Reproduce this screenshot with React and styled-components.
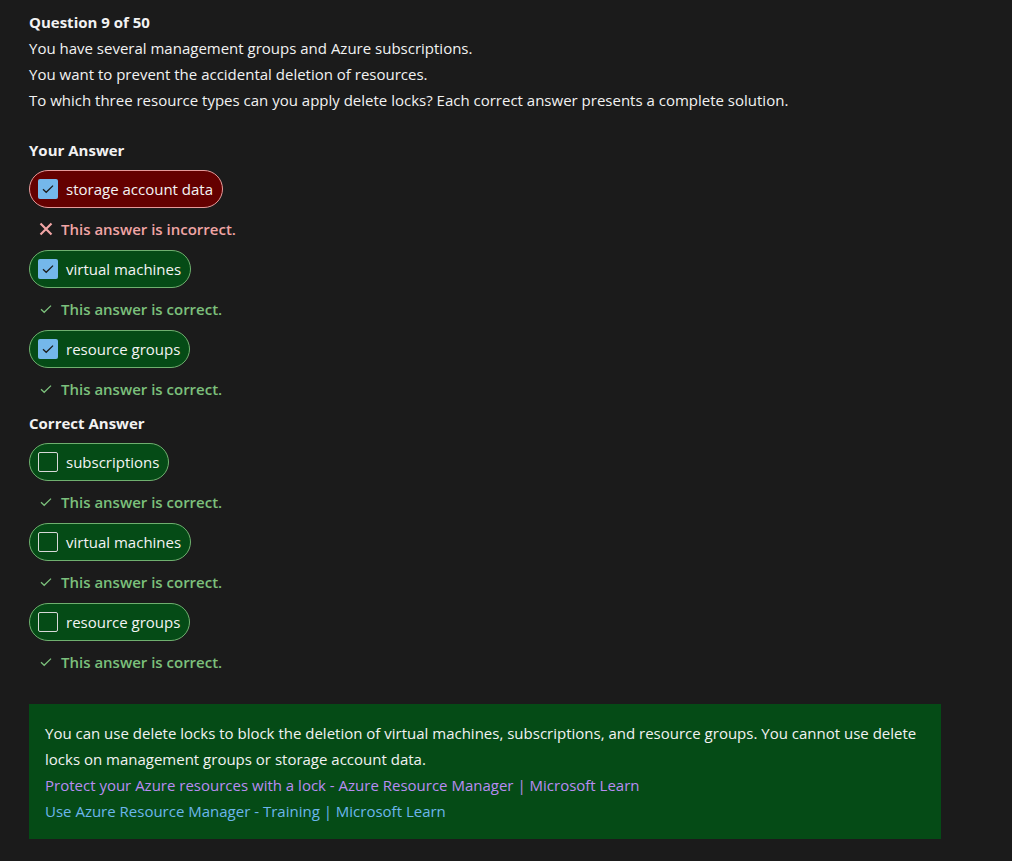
import React from "react";
import styled, { createGlobalStyle } from "styled-components";

const Global = createGlobalStyle`
  html, body { margin: 0; padding: 0; background: #1b1b1b; }
  body { font-family: "Open Sans", "Noto Sans", sans-serif; color: #f2f2f2; }
`;

const Page = styled.div`
  padding: 9px 29px 20px 29px;
  font-size: 15px;
  line-height: 26px;
  min-height: 832px;
  box-sizing: border-box;
`;

const Title = styled.div`
  font-weight: 700;
`;

const Para = styled.div``;

const SectionHead = styled.div`
  font-weight: 700;
  margin-top: ${(p) => p.$top || 0}px;
  margin-bottom: 7px;
`;

const Pill = styled.div`
  display: inline-flex;
  align-items: center;
  gap: 8px;
  height: 38px;
  box-sizing: border-box;
  padding: 0 9px 0 8px;
  border-radius: 19px;
  border: 1px solid ${(p) => (p.$bad ? "#e69a9a" : "#6fb06f")};
  background: ${(p) => (p.$bad ? "#640000" : "#054b16")};
  color: #f4f4f4;
`;

const Box = styled.span`
  width: 20px;
  height: 20px;
  box-sizing: border-box;
  border-radius: 2px;
  display: inline-flex;
  align-items: center;
  justify-content: center;
  background: ${(p) => (p.$checked ? "#74b7ea" : "transparent")};
  border: ${(p) => (p.$checked ? "none" : "1px solid #d8d8d8")};
`;

const Feedback = styled.div`
  display: flex;
  align-items: center;
  gap: 8px;
  padding: 8px 0 8px 9px;
  font-weight: 600;
  color: ${(p) => (p.$bad ? "#f1a5a5" : "#7cc07c")};
`;

const Icon = styled.span`
  width: 15px;
  display: inline-flex;
  justify-content: center;
`;

const Explain = styled.div`
  margin-top: 21px;
  width: 912px;
  box-sizing: border-box;
  background: #054b16;
  padding: 16px 16px 15px 16px;
  color: #f2f2f2;
`;

const Link = styled.a`
  display: block;
  text-decoration: none;
  color: ${(p) => (p.$visited ? "#b98cf2" : "#6cb6ec")};
`;

const Check = ({ color = "#1b1b1b" }) => (
  <svg width="12" height="10" viewBox="0 0 12 10">
    <path d="M1 5.2 L4.2 8.3 L11 1.6" fill="none" stroke={color} strokeWidth="1.3" />
  </svg>
);

const Cross = () => (
  <svg width="14" height="14" viewBox="0 0 14 14">
    <path d="M1.5 1.5 L12.5 12.5 M12.5 1.5 L1.5 12.5" stroke="#f1a5a5" strokeWidth="2.2" />
  </svg>
);

const Answer = ({ label, checked, bad }) => (
  <>
    <div>
      <Pill $bad={bad}>
        <Box $checked={checked}>{checked && <Check />}</Box>
        <span>{label}</span>
      </Pill>
    </div>
    <Feedback $bad={bad}>
      <Icon>{bad ? <Cross /> : <Check color="#7cc07c" />}</Icon>
      <span>{bad ? "This answer is incorrect." : "This answer is correct."}</span>
    </Feedback>
  </>
);

export default function App() {
  return (
    <>
      <Global />
      <Page>
        <Title>Question 9 of 50</Title>
        <Para>You have several management groups and Azure subscriptions.</Para>
        <Para>You want to prevent the accidental deletion of resources.</Para>
        <Para>
          To which three resource types can you apply delete locks? Each correct answer presents a complete solution.
        </Para>
        <SectionHead $top={24}>Your Answer</SectionHead>
        <Answer label="storage account data" checked bad />
        <Answer label="virtual machines" checked />
        <Answer label="resource groups" checked />
        <SectionHead $top={0}>Correct Answer</SectionHead>
        <Answer label="subscriptions" />
        <Answer label="virtual machines" />
        <Answer label="resource groups" />
        <Explain>
          <div>
            You can use delete locks to block the deletion of virtual machines, subscriptions, and resource groups. You cannot use delete locks on management groups or storage account data.
          </div>
          <Link $visited href="#">Protect your Azure resources with a lock - Azure Resource Manager | Microsoft Learn</Link>
          <Link href="#">Use Azure Resource Manager - Training | Microsoft Learn</Link>
        </Explain>
      </Page>
    </>
  );
}
